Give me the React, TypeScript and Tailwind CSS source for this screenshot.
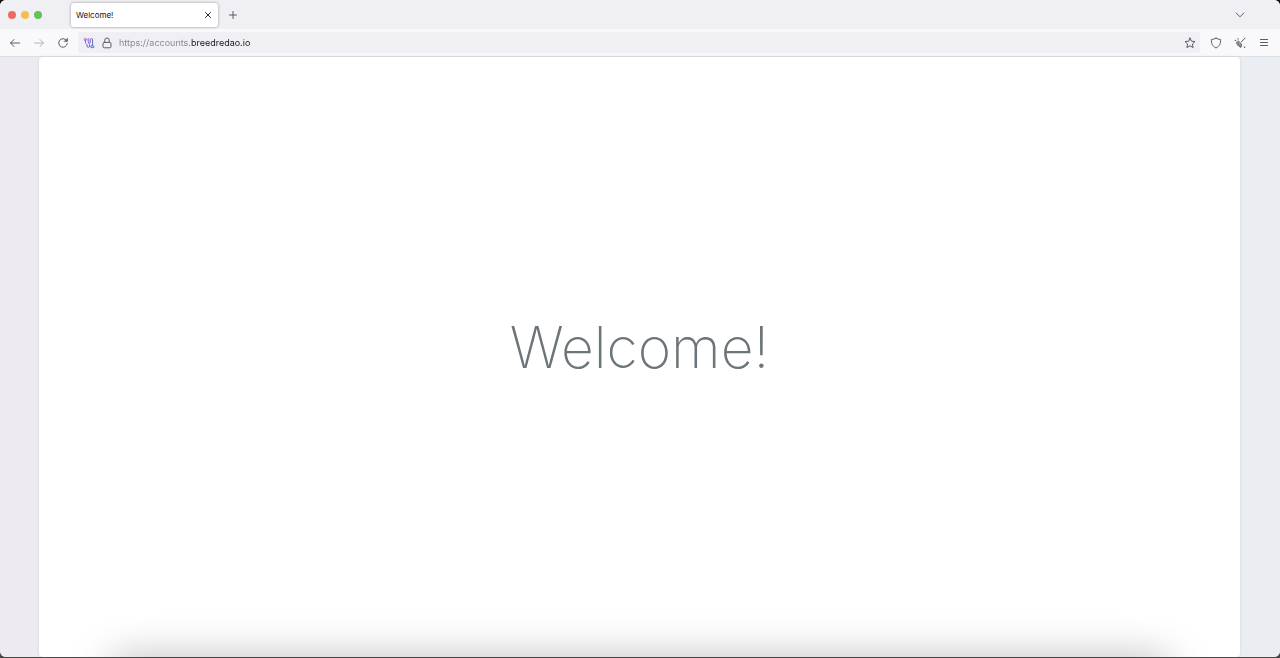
import { useState } from "react";
import type { ReactNode } from "react";

type IconButtonProps = { label: string; children: ReactNode; className?: string };

function IconButton({ label, children, className = "" }: IconButtonProps) {
  return (
    <button
      type="button"
      aria-label={label}
      className={`flex h-5 w-4 shrink-0 items-center justify-center text-[#5b5b66] ${className}`}
    >
      {children}
    </button>
  );
}

const stroke = {
  fill: "none",
  stroke: "currentColor",
  strokeLinecap: "round" as const,
  strokeLinejoin: "round" as const,
};

function TabStrip() {
  return (
    <div className="flex h-[29px] shrink-0 items-center bg-[#f0eff4]">
      <div className="flex w-[71px] shrink-0 items-center gap-[5px] pl-2">
        <button type="button" aria-label="Close window" className="size-2 rounded-full bg-[#ed6a5e]" />
        <button type="button" aria-label="Minimize window" className="size-2 rounded-full bg-[#f5bd4f]" />
        <button type="button" aria-label="Zoom window" className="size-2 rounded-full bg-[#61c454]" />
      </div>
      <div className="flex h-6 w-[147px] items-center justify-between rounded-[3px] bg-white pr-[3px] pl-[5px] shadow-[0_0_3px_rgba(0,0,0,0.38)]">
        <span className="text-[8px] leading-3 text-[#15141a]">Welcome!</span>
        <button type="button" aria-label="Close tab" className="flex size-[14px] items-center justify-center text-[#2b2a33]">
          <svg viewBox="0 0 8 8" className="size-2" {...stroke}>
            <path d="M1.5 1.5l5 5M6.5 1.5l-5 5" />
          </svg>
        </button>
      </div>
      <IconButton label="New tab" className="ml-[7px]">
        <svg viewBox="0 0 10 10" className="size-[10px]" {...stroke}>
          <path d="M5 1.500v7M1.500 5h7" />
        </svg>
      </IconButton>
      <IconButton label="List all tabs" className="mr-8 ml-auto">
        <svg viewBox="0 0 10 10" className="size-[10px]" {...stroke}>
          <path d="M1.200 3l3.800 3.800L8.800 3" />
        </svg>
      </IconButton>
    </div>
  );
}

function ContainerIcon() {
  return (
    <svg viewBox="0 0 12 12" className="size-3" fill="none" strokeLinecap="round" strokeLinejoin="round">
      <defs>
        <linearGradient id="route" x1="0" y1="0" x2="12" y2="12" gradientUnits="userSpaceOnUse">
          <stop offset="0.1" stopColor="#c04fe0" />
          <stop offset="0.5" stopColor="#6558c8" />
          <stop offset="1" stopColor="#3fa3dc" />
        </linearGradient>
      </defs>
      <g stroke="url(#route)" strokeWidth="1">
        <circle cx="2.3" cy="2.5" r="1.1" />
        <path d="M2.500 3.700v1.800c0 1.200 1.500 1.400 1.500 2.600v.9a1.300 1.300 0 0 0 2.600 0V7.500c0-1.200-1.400-1.600-1.400-2.800V1.500" />
        <path d="M7.200 5.500V2.800a1.200 1.200 0 0 1 2.400 0v5.600M8.300 8.800h2.500v1.800H8.300z" />
      </g>
    </svg>
  );
}

function AddressBar() {
  const [url, setUrl] = useState("https://accounts.breedredao.io");
  return (
    <div className="flex h-[21px] min-w-0 flex-1 items-center rounded-[3px] bg-[#f0eff4]">
      <IconButton label="Container" className="ml-[3px]">
        <ContainerIcon />
      </IconButton>
      <IconButton label="Site information" className="ml-[2px]">
        <svg viewBox="0 0 10 12" className="h-3 w-[10px]" {...stroke}>
          <rect x="1" y="5.4" width="8" height="5.4" rx="1.2" />
          <path d="M2.8 5.4V3.2a2.2 2.2 0 0 1 4.4 0v2.2" />
        </svg>
      </IconButton>
      <input
        aria-label="Address"
        type="text"
        value={url}
        onChange={(event) => setUrl(event.target.value)}
        spellCheck={false}
        className="ml-1 h-5 min-w-0 flex-1 bg-[linear-gradient(90deg,#85848d_72px,#15141a_72px)] bg-clip-text text-[9px] leading-5 text-transparent caret-[#15141a] outline-none"
      />
      <IconButton label="Bookmark this page" className="mr-[2px]">
        <svg viewBox="0 0 12 12" className="size-3" {...stroke}>
          <path d="M6 1l1.5 3.2 3.5.4-2.6 2.4.7 3.6L6 8.8l-3.1 1.8.7-3.6L1 4.6l3.5-.4z" />
        </svg>
      </IconButton>
    </div>
  );
}

function Toolbar() {
  return (
    <div className="flex h-7 shrink-0 items-center border-b border-[#dfdee4] bg-[#f9f9fb] pr-2 pl-[7px]">
      <IconButton label="Back">
        <svg viewBox="0 0 12 12" className="size-3" {...stroke} strokeWidth="1">
          <path d="M10.5 6h-9M5 2.5L1.5 6 5 9.5" />
        </svg>
      </IconButton>
      <IconButton label="Forward" className="ml-2 opacity-45">
        <svg viewBox="0 0 12 12" className="size-3" {...stroke} strokeWidth="1">
          <path d="M1.5 6h9M7 2.5L10.5 6 7 9.5" />
        </svg>
      </IconButton>
      <IconButton label="Reload" className="mr-[7px] ml-2">
        <svg viewBox="0 0 12 12" className="size-3" {...stroke} strokeWidth="1">
          <path d="M9.5 3.4A4.3 4.3 0 1 0 10.3 6.5" />
          <path d="M10.6 1.3v3.3H7.3z" fill="currentColor" strokeWidth="0.5" />
        </svg>
      </IconButton>
      <AddressBar />
      <div className="ml-2 flex gap-2">
        <IconButton label="Protections">
          <svg viewBox="0 0 12 12" className="size-3" {...stroke}>
            <path d="M6 1.2c1.2.9 2.8 1.1 4.6 1.2.2 3.8-.9 6.8-4.6 8.600-3.700-1.800-4.800-4.800-4.600-8.600C3.200 2.300 4.800 2.100 6 1.200z" />
          </svg>
        </IconButton>
        <IconButton label="Clean up">
          <svg viewBox="0 0 12 12" className="size-3" {...stroke}>
            <path d="M11.200 1L7.200 5" />
            <path d="M4.600 4.200l3.200 3.200-.8 2.900-1.200-.3.200-1.400-1 .8-1.200-1.200.8-1.200-1.500.3-.6-1.600z" fill="currentColor" fillOpacity="0.6" strokeWidth="0.9" />
            <path d="M1.400 3.400h.1M4 1.900h.1M10.500 10.300h.1" strokeWidth="1.400" />
          </svg>
        </IconButton>
        <IconButton label="Open application menu">
          <svg viewBox="0 0 10 10" className="size-[10px]" {...stroke}>
            <path d="M1.500 1.500h7M1.500 4.500h7M1.500 7.500h7" />
          </svg>
        </IconButton>
      </div>
    </div>
  );
}

export default function App() {
  return (
    <div className="flex min-h-screen flex-col bg-[#484848] bg-[linear-gradient(#111,#111)] bg-[length:100%_50%] bg-no-repeat pb-px font-['Inter',sans-serif]">
      <div className="relative flex flex-1 flex-col overflow-hidden rounded-[6px] bg-white">
        <TabStrip />
        <Toolbar />
        <main className="flex flex-1 bg-linear-to-r from-[#edeaf1] to-[#eaeef3] pr-10 pl-[39px]">
          <section className="flex flex-1 items-center justify-center rounded-[4px] bg-white pb-5 shadow-[0_0_3px_rgba(30,40,70,0.12)]">
            <h1 className="text-[57px] leading-none font-extralight text-[#6c7579]">Welcome!</h1>
          </section>
        </main>
        <div
          aria-hidden="true"
          className="pointer-events-none absolute inset-x-[112px] top-full h-10 shadow-[0_0_40px_rgba(0,0,0,0.26)]"
        />
      </div>
    </div>
  );
}
